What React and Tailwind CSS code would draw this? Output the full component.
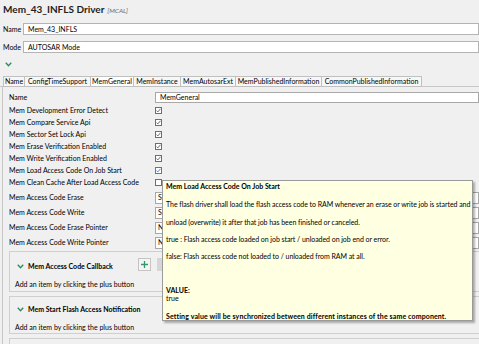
import React from "react";

const Check = ({ blue }) => (
  <div className={`w-[7px] h-[7px] border bg-white flex items-center justify-center ${blue ? "border-[#3c7fd0]" : "border-[#6e6e6e]"}`}>
    <svg width="5" height="5" viewBox="0 0 5 5">
      <polyline points="0.5,2.6 1.8,3.9 4.5,0.8" fill="none" stroke={blue ? "#3c7fd0" : "#555"} strokeWidth="0.9" />
    </svg>
  </div>
);

const Empty = () => <div className="w-[7px] h-[7px] border border-[#6e6e6e] bg-white" />;

const Chevron = ({ className = "" }) => (
  <svg width="7" height="5" viewBox="0 0 7 5" className={className}>
    <polyline points="0.8,0.8 3.5,3.8 6.2,0.8" fill="none" stroke="#2e8b6a" strokeWidth="1.4" />
  </svg>
);

const checkRows = [
  ["Mem Development Error Detect", "c"],
  ["Mem Compare Service Api", "c"],
  ["Mem Sector Set Lock Api", "c"],
  ["Mem Erase Verification Enabled", "c"],
  ["Mem Write Verification Enabled", "c"],
  ["Mem Load Access Code On Job Start", "b"],
  ["Mem Clean Cache After Load Access Code", "e"],
];

const selectRows = [
  ["Mem Access Code Erase", "STANDARD"],
  ["Mem Access Code Write", "STANDARD"],
  ["Mem Access Code Erase Pointer", "NULL_PTR"],
  ["Mem Access Code Write Pointer", "NULL_PTR"],
];

const tabs = [
  ["Name", 21],
  ["ConfigTimeSupport", 66],
  ["MemGeneral", 43],
  ["MemInstance", 47],
  ["MemAutosarExt", 55],
  ["MemPublishedInformation", 86],
  ["CommonPublishedInformation", 101],
];

export default function App() {
  return (
    <div className="w-[479px] h-[344px] overflow-hidden bg-[#f0f0f0] relative text-black font-['Lato','Noto_Sans',sans-serif] text-[7px]">
      {/* title */}
      <div className="h-[20px] pl-[3px] pt-[2px] flex items-baseline">
        <span className="text-[10px] font-bold leading-[15px] text-[#1e1e1e]">Mem_43_INFLS Driver</span>
        <span className="ml-[3px] text-[6.5px] italic text-[#6a6a6a]">[MCAL]</span>
      </div>
      {/* name */}
      <div className="h-[12px] mt-[3px] flex items-center">
        <div className="w-[23px] pl-[3px]">Name</div>
        <div className="flex-1 h-[12px] bg-white border border-[#b4b4b4] flex items-center pl-[4px]">Mem_43_INFLS</div>
      </div>
      {/* mode */}
      <div className="h-[12px] mt-[6px] flex items-center">
        <div className="w-[23px] pl-[3px]">Mode</div>
        <div className="flex-1 h-[12px] bg-white border border-[#b4b4b4] flex items-center pl-[4px]">AUTOSAR Mode</div>
      </div>
      {/* chevron */}
      <div className="h-[23px] pl-[5px] pt-[9px]">
        <Chevron />
      </div>
      {/* tabs */}
      <div className="h-[11px] flex pl-[3px] border-b border-[#c8c8c8]">
        {tabs.map(([t, w]) => (
          <div
            key={t}
            style={{ width: w }}
            className={`h-[11px] border border-r-0 last:border-r border-[#c0c0c0] flex items-center justify-center leading-none whitespace-nowrap ${t === "MemGeneral" ? "bg-white" : "bg-[#f7f7f7]"}`}
          >
            {t}
          </div>
        ))}
      </div>
      {/* content */}
      <div className="ml-[2px] border-l border-[#c8c8c8] pl-[6px] pt-[4px] h-[260px]">
        <div className="h-[12px] flex items-center">
          <div className="w-[146px]">Name</div>
          <div className="flex-1 h-[11px] bg-white border border-[#a8a8a8] flex items-center pl-[4px]">MemGeneral</div>
        </div>
        <div className="mt-[1px]">
          {checkRows.map(([l, s]) => (
            <div key={l} className="h-[12px] flex items-center">
              <div className="w-[146px] whitespace-nowrap">{l}</div>
              {s === "c" ? <Check /> : s === "b" ? <Check blue /> : <Empty />}
            </div>
          ))}
        </div>
        <div className="mt-[2px]">
          {selectRows.map(([l, v]) => (
            <div key={l} className="h-[15px] flex items-center">
              <div className="w-[146px] whitespace-nowrap">{l}</div>
              <div className="flex-1 h-[12px] bg-white border border-[#a8a8a8] flex items-center pl-[2px]">{v}</div>
            </div>
          ))}
        </div>
        {/* section 1 */}
        <div className="mt-[1px] border border-r-0 border-[#cfcfcf] pl-[5px] pt-[4px] h-[41px]">
          <div className="h-[20px] flex items-start">
            <div className="h-[20px] flex items-center">
              <Chevron className="ml-[2px]" />
              <span className="ml-[4px] font-bold w-[110px]">Mem Access Code Callback</span>
            </div>
            <div className="mt-[2px] w-[13px] h-[13px] border border-[#c4c4c4] bg-[#f4f4f4] flex items-center justify-center">
              <svg width="9" height="9" viewBox="0 0 9 9">
                <path d="M4.5 1V8M1 4.5H8" stroke="#2e9a6a" strokeWidth="1.3" />
              </svg>
            </div>
            <div className="mt-[2px] ml-[6px] w-[13px] h-[13px] bg-[#d6d6d6]" />
          </div>
          <div className="h-[12px] mt-[2px] flex items-center">Add an item by clicking the plus button</div>
        </div>
        {/* section 2 */}
        <div className="mt-[4px] border border-r-0 border-[#cfcfcf] pl-[5px] pt-[2px] h-[38px]">
          <div className="h-[20px] flex items-center">
            <Chevron className="ml-[2px]" />
            <span className="ml-[4px] font-bold">Mem Start Flash Access Notification</span>
          </div>
          <div className="h-[12px] mt-[2px] flex items-center">Add an item by clicking the plus button</div>
        </div>
        {/* section 3 */}
        <div className="mt-[4px] border border-r-0 border-[#cfcfcf] h-[30px]" />
      </div>

      {/* tooltip */}
      <div className="absolute left-[162px] top-[180px] w-[311px] h-[141px] bg-[#ffffe1] border border-[#9a9a9a] shadow-[2px_2px_2px_rgba(0,0,0,0.3)] pl-[3px] leading-[10px] whitespace-nowrap">
        <div className="font-bold">Mem Load Access Code On Job Start</div>
        <div className="mt-[8px] tracking-[-0.05px]">The flash driver shall load the flash access code to RAM whenever an erase or write job is started and</div>
        <div className="mt-[8px] tracking-[-0.05px]">unload (overwrite) it after that job has been finished or canceled.</div>
        <div className="mt-[7px] tracking-[-0.05px]">true : Flash access code loaded on job start / unloaded on job end or error.</div>
        <div className="mt-[7px] tracking-[-0.05px]">false: Flash access code not loaded to / unloaded from RAM at all.</div>
        <div className="mt-[25px] font-bold leading-[8px]">VALUE:</div>
        <div className="leading-[8px]">true</div>
        <div className="mt-[9px] font-bold tracking-[0.12px]">Setting value will be synchronized between different instances of the same component.</div>
      </div>
    </div>
  );
}
